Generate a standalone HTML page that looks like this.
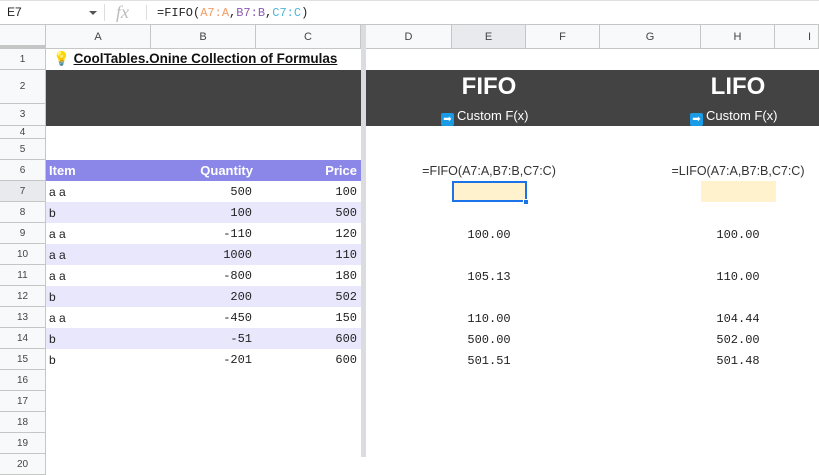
<!DOCTYPE html>
<html><head><meta charset="utf-8"><style>
*{margin:0;padding:0;box-sizing:border-box}
body{width:819px;height:457px;overflow:hidden;background:#fff;font-family:"Liberation Sans",sans-serif;position:relative}
.a{position:absolute}
.rh{position:absolute;left:0;width:46px;background:#f8f9fa;border-bottom:1px solid #c4c7c5;border-right:1px solid #c4c7c5;color:#444;font-size:10px;display:flex;align-items:center;justify-content:center}
.ch{position:absolute;top:25px;height:24px;background:#f8f9fa;border-right:1px solid #c4c7c5;border-bottom:1px solid #c4c7c5;color:#444;font-size:11px;display:flex;align-items:center;justify-content:center}
.row{position:absolute;left:46px;width:315px;height:21px;font-size:12px;color:#222}
.row span{position:absolute;top:4px}
.m{font-family:"Liberation Mono","DejaVu Sans Mono",monospace;font-size:12px}
.v{position:absolute;width:74px;text-align:center;font-family:"Liberation Mono","DejaVu Sans Mono",monospace;font-size:12px;color:#222}
</style></head><body>
<div class="a" style="left:0;top:0;width:819px;height:25px;border-bottom:1px solid #c4c7c5;border-top:1px solid #e0e0e0"></div>
<div class="a" style="left:7px;top:5px;font-size:12px;color:#222">E7</div>
<div class="a" style="left:89px;top:11px;width:0;height:0;border-left:4px solid transparent;border-right:4px solid transparent;border-top:4px solid #555"></div>
<div class="a" style="left:104px;top:4px;width:1px;height:17px;background:#ddd"></div>
<div class="a" style="left:116px;top:1px;font-family:'Liberation Serif',serif;font-style:italic;font-size:18px;color:#bbb;line-height:22px">fx</div>
<div class="a" style="left:146px;top:5px;width:1px;height:15px;background:#ddd"></div>
<div class="a m" style="left:157px;top:6px;color:#222">=FIFO(<span style="color:#f29b62">A7:A</span>,<span style="color:#8a5cb0">B7:B</span>,<span style="color:#4cb6d8">C7:C</span>)</div>
<div class="a" style="left:0;top:25px;width:46px;height:24px;background:#f8f9fa;border-right:1px solid #c4c7c5;border-bottom:4px solid #c4c7c5"></div>
<div class="ch" style="left:46px;width:105px">A</div>
<div class="ch" style="left:151px;width:105px">B</div>
<div class="ch" style="left:256px;width:105px">C</div>
<div class="ch" style="left:366px;width:86px">D</div>
<div class="ch" style="left:452px;width:74px;background:#e8eaed">E</div>
<div class="ch" style="left:526px;width:74px">F</div>
<div class="ch" style="left:600px;width:101px">G</div>
<div class="ch" style="left:701px;width:74px">H</div>
<div class="ch" style="left:775px;width:44px;justify-content:flex-start;padding-left:33px">I</div>
<div class="rh" style="top:49px;height:21px">1</div>
<div class="rh" style="top:70px;height:34px">2</div>
<div class="rh" style="top:104px;height:22px">3</div>
<div class="rh" style="top:126px;height:13px">4</div>
<div class="rh" style="top:139px;height:21px">5</div>
<div class="rh" style="top:160px;height:21px">6</div>
<div class="rh" style="top:181px;height:21px;background:#e8eaed">7</div>
<div class="rh" style="top:202px;height:21px">8</div>
<div class="rh" style="top:223px;height:21px">9</div>
<div class="rh" style="top:244px;height:21px">10</div>
<div class="rh" style="top:265px;height:21px">11</div>
<div class="rh" style="top:286px;height:21px">12</div>
<div class="rh" style="top:307px;height:21px">13</div>
<div class="rh" style="top:328px;height:21px">14</div>
<div class="rh" style="top:349px;height:21px">15</div>
<div class="rh" style="top:370px;height:21px">16</div>
<div class="rh" style="top:391px;height:21px">17</div>
<div class="rh" style="top:412px;height:21px">18</div>
<div class="rh" style="top:433px;height:21px">19</div>
<div class="rh" style="top:454px;height:21px">20</div>
<div class="a" style="left:361px;top:25px;width:5px;height:432px;background:#dadce0"></div>
<div class="a" style="left:53px;top:51px;font-size:13.5px;font-weight:bold;color:#111">💡 <span style="text-decoration:underline">CoolTables.Onine Collection of Formulas</span></div>
<div class="a" style="left:46px;top:70px;width:315px;height:56px;background:#434343"></div>
<div class="a" style="left:366px;top:70px;width:453px;height:56px;background:#434343"></div>
<div class="a" style="left:440px;top:73px;width:98px;text-align:center;color:#fff;font-weight:bold;font-size:24px">FIFO</div>
<div class="a" style="left:689px;top:73px;width:98px;text-align:center;color:#fff;font-weight:bold;font-size:24px">LIFO</div>
<div class="a" style="left:441px;top:108px;font-size:13px;color:#fff"><span style="display:inline-block;width:13px;height:13px;background:#1a9be6;border-radius:2px;font-size:10px;line-height:13px;text-align:center;vertical-align:-2px;margin-right:3px">➡</span>Custom F(x)</div>
<div class="a" style="left:690px;top:108px;font-size:13px;color:#fff"><span style="display:inline-block;width:13px;height:13px;background:#1a9be6;border-radius:2px;font-size:10px;line-height:13px;text-align:center;vertical-align:-2px;margin-right:3px">➡</span>Custom F(x)</div>
<div class="row" style="top:160px;background:#8b87e8;color:#fff;font-weight:bold;font-size:13px"><span style="left:3px;top:3px">Item</span><span style="right:108px;top:3px">Quantity</span><span style="right:4px;top:3px">Price</span></div>
<div class="row" style="top:181px"><span style="left:3px">a a</span><span class="m" style="right:109px">500</span><span class="m" style="right:4px">100</span></div>
<div class="row" style="top:202px;background:#e8e7fc"><span style="left:3px">b</span><span class="m" style="right:109px">100</span><span class="m" style="right:4px">500</span></div>
<div class="row" style="top:223px"><span style="left:3px">a a</span><span class="m" style="right:109px">-110</span><span class="m" style="right:4px">120</span></div>
<div class="row" style="top:244px;background:#e8e7fc"><span style="left:3px">a a</span><span class="m" style="right:109px">1000</span><span class="m" style="right:4px">110</span></div>
<div class="row" style="top:265px"><span style="left:3px">a a</span><span class="m" style="right:109px">-800</span><span class="m" style="right:4px">180</span></div>
<div class="row" style="top:286px;background:#e8e7fc"><span style="left:3px">b</span><span class="m" style="right:109px">200</span><span class="m" style="right:4px">502</span></div>
<div class="row" style="top:307px"><span style="left:3px">a a</span><span class="m" style="right:109px">-450</span><span class="m" style="right:4px">150</span></div>
<div class="row" style="top:328px;background:#e8e7fc"><span style="left:3px">b</span><span class="m" style="right:109px">-51</span><span class="m" style="right:4px">600</span></div>
<div class="row" style="top:349px"><span style="left:3px">b</span><span class="m" style="right:109px">-201</span><span class="m" style="right:4px">600</span></div>
<div class="a" style="left:400px;top:164px;width:178px;text-align:center;font-size:12.5px;color:#333">=FIFO(A7:A,B7:B,C7:C)</div>
<div class="a" style="left:649px;top:164px;width:178px;text-align:center;font-size:12.5px;color:#333">=LIFO(A7:A,B7:B,C7:C)</div>
<div class="a" style="left:452px;top:181px;width:75px;height:21px;background:#fff2cc;border:2px solid #1a73e8"></div>
<div class="a" style="left:523px;top:199px;width:6px;height:6px;background:#1a73e8;border:1px solid #fff"></div>
<div class="a" style="left:701px;top:181px;width:75px;height:21px;background:#fff2cc"></div>
<div class="v" style="left:452px;top:228px">100.00</div>
<div class="v" style="left:701px;top:228px">100.00</div>
<div class="v" style="left:452px;top:270px">105.13</div>
<div class="v" style="left:701px;top:270px">110.00</div>
<div class="v" style="left:452px;top:312px">110.00</div>
<div class="v" style="left:701px;top:312px">104.44</div>
<div class="v" style="left:452px;top:333px">500.00</div>
<div class="v" style="left:701px;top:333px">502.00</div>
<div class="v" style="left:452px;top:354px">501.51</div>
<div class="v" style="left:701px;top:354px">501.48</div>
</body></html>
